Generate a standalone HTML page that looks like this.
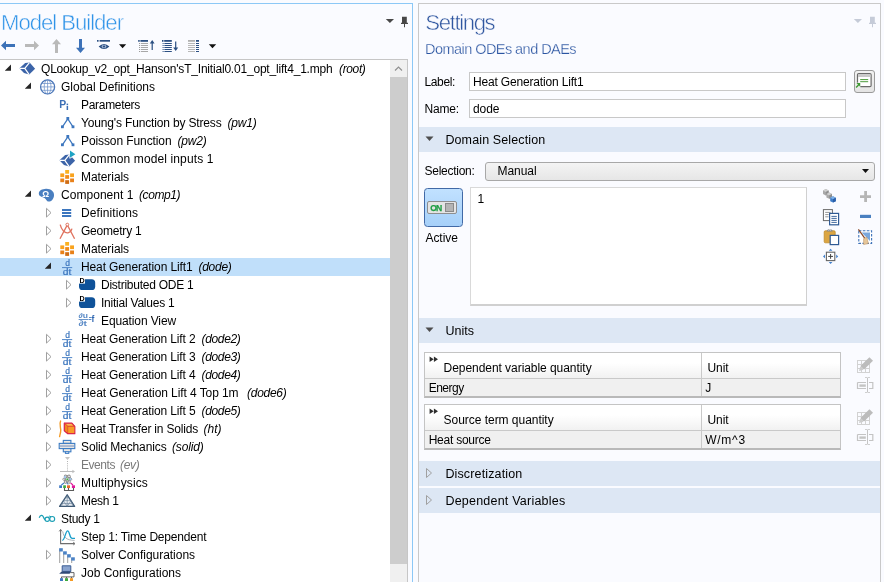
<!DOCTYPE html>
<html><head><meta charset="utf-8"><title>Model Builder</title>
<style>
html,body{margin:0;padding:0;width:884px;height:582px;overflow:hidden;}
body{width:884px;height:582px;overflow:hidden;background:#fafbff;position:relative;font-family:"Liberation Sans", sans-serif;}
.t{position:absolute;white-space:nowrap;line-height:1;}
</style></head><body><div style="position:absolute;left:0;top:0;width:884px;height:582px;overflow:hidden;will-change:transform;">
<div style="position:absolute;left:-2px;top:3px;width:415px;height:600px;border:1px solid #8cc8f6;box-sizing:border-box;"></div>
<div style="position:absolute;left:0px;top:59px;width:408px;height:530px;background:#fff;border-top:1px solid #c6c6c6;border-right:1px solid #c6c6c6;box-sizing:border-box;"></div>
<div style="position:absolute;left:390px;top:60px;width:17px;height:522px;background:#f0f0f0;"></div>
<div style="position:absolute;left:390px;top:77px;width:17px;height:487px;background:#cdcdcd;"></div>
<svg style="position:absolute;left:390px;top:60px" width="17" height="17" viewBox="0 0 17 17"><path d="M5 10.5 L8.5 7 L12 10.5" fill="none" stroke="#909090" stroke-width="1.15"/></svg>
<svg style="position:absolute;left:384px;top:14px" width="28" height="14" viewBox="0 0 28 14"><path d="M1.8 4.9 H10 L5.9 9 Z" fill="#484848"/><path d="M18 2.8 H22.8 V8.7 H24 V10 H21 V13.2 H20 V10 H17 V8.7 H18 Z" fill="#484848"/></svg>
<div style="position:absolute;left:418px;top:3px;width:463px;height:600px;border:1px solid #c9c9c9;box-sizing:border-box;"></div>
<svg style="position:absolute;left:852px;top:14px" width="28" height="14" viewBox="0 0 28 14"><path d="M1.8 4.9 H10 L5.9 9 Z" fill="#c5cbd8"/><path d="M18 2.8 H22.8 V8.7 H24 V10 H21 V13.2 H20 V10 H17 V8.7 H18 Z" fill="#c5cbd8"/></svg>
<div style="position:absolute;left:469px;top:72px;width:377px;height:19px;background:#fff;border:1px solid #c8c8c8;box-sizing:border-box;"></div>
<div style="position:absolute;left:469px;top:99px;width:377px;height:19px;background:#fff;border:1px solid #c8c8c8;box-sizing:border-box;"></div>
<div style="position:absolute;left:854px;top:70px;width:21px;height:23px;background:linear-gradient(#f2f2f2,#e4e4e4);border:1px solid #9a9a9a;border-radius:3px;box-sizing:border-box;"></div>
<div style="position:absolute;left:419px;top:127px;width:461px;height:25px;background:#dde7f4;"></div>
<svg style="position:absolute;left:424px;top:135px" width="12" height="8" viewBox="0 0 12 8"><path d="M1.5 1.5 H9.5 L5.5 6 Z" fill="#4d4d4d"/></svg>
<div style="position:absolute;left:419px;top:318px;width:461px;height:25px;background:#dde7f4;"></div>
<svg style="position:absolute;left:424px;top:326px" width="12" height="8" viewBox="0 0 12 8"><path d="M1.5 1.5 H9.5 L5.5 6 Z" fill="#4d4d4d"/></svg>
<div style="position:absolute;left:419px;top:461px;width:461px;height:25px;background:#dde7f4;"></div>
<svg style="position:absolute;left:424px;top:467px" width="10" height="12" viewBox="0 0 10 12"><path d="M2.5 1.5 L7.5 6 L2.5 10.5 Z" fill="none" stroke="#a0a0a0" stroke-width="1"/></svg>
<div style="position:absolute;left:419px;top:488px;width:461px;height:25px;background:#dde7f4;"></div>
<svg style="position:absolute;left:424px;top:494px" width="10" height="12" viewBox="0 0 10 12"><path d="M2.5 1.5 L7.5 6 L2.5 10.5 Z" fill="none" stroke="#a0a0a0" stroke-width="1"/></svg>
<div style="position:absolute;left:485px;top:162px;width:390px;height:19px;background:linear-gradient(#f4f4f4,#e6e6e6);border:1px solid #a8a8a8;border-radius:3px;box-sizing:border-box;"></div>
<svg style="position:absolute;left:861px;top:168px" width="10" height="6" viewBox="0 0 10 6"><path d="M1 1 H8 L4.5 5 Z" fill="#111"/></svg>
<div style="position:absolute;left:423.5px;top:187.5px;width:39px;height:39px;background:linear-gradient(#c1e1ff,#a6d0f9);border:1.5px solid #4169a6;border-radius:3.5px;box-sizing:border-box;"></div>
<div style="position:absolute;left:427px;top:201px;width:30px;height:13px;background:#e4e4e4;border:1px solid #8e8e8e;border-radius:2px;box-sizing:border-box;"></div>
<div style="position:absolute;left:445px;top:203px;width:9px;height:9px;background:#b4b4b4;border:1px solid #8a8a8a;box-sizing:border-box;"></div>
<div style="position:absolute;left:470px;top:187px;width:337px;height:119px;background:#fff;border:1px solid #d9d9d9;border-bottom:2px solid #d0d0d0;border-right:1px solid #d0d0d0;box-sizing:border-box;"></div>
<div style="position:absolute;left:424px;top:352px;width:417px;height:46px;background:#f0f0f0;border:1px solid #c4c4c4;border-bottom:2px solid #b9b9b9;box-sizing:border-box;"></div>
<div style="position:absolute;left:425px;top:353px;width:415px;height:25px;background:linear-gradient(#ffffff 40%,#f1f1f1);border-bottom:1px solid #c9c9c9;"></div>
<div style="position:absolute;left:701px;top:353px;width:1px;height:43px;background:#c9c9c9;"></div>
<svg style="position:absolute;left:429px;top:356px" width="10" height="7" viewBox="0 0 10 7"><path d="M0.6 0.4 L4.7 3.2 L0.6 6 Z M4.9 0.4 L9 3.2 L4.9 6 Z" fill="#2e2e2e"/></svg>
<div style="position:absolute;left:424px;top:404px;width:417px;height:46px;background:#f0f0f0;border:1px solid #c4c4c4;border-bottom:2px solid #b9b9b9;box-sizing:border-box;"></div>
<div style="position:absolute;left:425px;top:405px;width:415px;height:25px;background:linear-gradient(#ffffff 40%,#f1f1f1);border-bottom:1px solid #c9c9c9;"></div>
<div style="position:absolute;left:701px;top:405px;width:1px;height:43px;background:#c9c9c9;"></div>
<svg style="position:absolute;left:429px;top:408px" width="10" height="7" viewBox="0 0 10 7"><path d="M0.6 0.4 L4.7 3.2 L0.6 6 Z M4.9 0.4 L9 3.2 L4.9 6 Z" fill="#2e2e2e"/></svg>
<div style="position:absolute;left:0px;top:258px;width:390px;height:18px;background:#c0dffa;"></div>
<svg style="position:absolute;left:5px;top:64px" width="10" height="10" viewBox="0 0 10 10"><path d="M6 0.6 V6.8 H-0.2 Z" fill="#262626"/></svg>
<svg style="position:absolute;left:25px;top:82px" width="10" height="10" viewBox="0 0 10 10"><path d="M6 0.6 V6.8 H-0.2 Z" fill="#262626"/></svg>
<svg style="position:absolute;left:25px;top:190px" width="10" height="10" viewBox="0 0 10 10"><path d="M6 0.6 V6.8 H-0.2 Z" fill="#262626"/></svg>
<svg style="position:absolute;left:45px;top:207px" width="10" height="12" viewBox="0 0 10 12"><path d="M1.5 1.3 L6 5.7 L1.5 10.1 Z" fill="#fff" stroke="#a0a0a0" stroke-width="1"/></svg>
<svg style="position:absolute;left:45px;top:225px" width="10" height="12" viewBox="0 0 10 12"><path d="M1.5 1.3 L6 5.7 L1.5 10.1 Z" fill="#fff" stroke="#a0a0a0" stroke-width="1"/></svg>
<svg style="position:absolute;left:45px;top:243px" width="10" height="12" viewBox="0 0 10 12"><path d="M1.5 1.3 L6 5.7 L1.5 10.1 Z" fill="#fff" stroke="#a0a0a0" stroke-width="1"/></svg>
<svg style="position:absolute;left:45px;top:262px" width="10" height="10" viewBox="0 0 10 10"><path d="M6 0.6 V6.8 H-0.2 Z" fill="#262626"/></svg>
<svg style="position:absolute;left:65px;top:279px" width="10" height="12" viewBox="0 0 10 12"><path d="M1.5 1.3 L6 5.7 L1.5 10.1 Z" fill="#fff" stroke="#a0a0a0" stroke-width="1"/></svg>
<svg style="position:absolute;left:65px;top:297px" width="10" height="12" viewBox="0 0 10 12"><path d="M1.5 1.3 L6 5.7 L1.5 10.1 Z" fill="#fff" stroke="#a0a0a0" stroke-width="1"/></svg>
<svg style="position:absolute;left:45px;top:333px" width="10" height="12" viewBox="0 0 10 12"><path d="M1.5 1.3 L6 5.7 L1.5 10.1 Z" fill="#fff" stroke="#a0a0a0" stroke-width="1"/></svg>
<svg style="position:absolute;left:45px;top:351px" width="10" height="12" viewBox="0 0 10 12"><path d="M1.5 1.3 L6 5.7 L1.5 10.1 Z" fill="#fff" stroke="#a0a0a0" stroke-width="1"/></svg>
<svg style="position:absolute;left:45px;top:369px" width="10" height="12" viewBox="0 0 10 12"><path d="M1.5 1.3 L6 5.7 L1.5 10.1 Z" fill="#fff" stroke="#a0a0a0" stroke-width="1"/></svg>
<svg style="position:absolute;left:45px;top:387px" width="10" height="12" viewBox="0 0 10 12"><path d="M1.5 1.3 L6 5.7 L1.5 10.1 Z" fill="#fff" stroke="#a0a0a0" stroke-width="1"/></svg>
<svg style="position:absolute;left:45px;top:405px" width="10" height="12" viewBox="0 0 10 12"><path d="M1.5 1.3 L6 5.7 L1.5 10.1 Z" fill="#fff" stroke="#a0a0a0" stroke-width="1"/></svg>
<svg style="position:absolute;left:45px;top:423px" width="10" height="12" viewBox="0 0 10 12"><path d="M1.5 1.3 L6 5.7 L1.5 10.1 Z" fill="#fff" stroke="#a0a0a0" stroke-width="1"/></svg>
<svg style="position:absolute;left:45px;top:441px" width="10" height="12" viewBox="0 0 10 12"><path d="M1.5 1.3 L6 5.7 L1.5 10.1 Z" fill="#fff" stroke="#a0a0a0" stroke-width="1"/></svg>
<svg style="position:absolute;left:45px;top:459px" width="10" height="12" viewBox="0 0 10 12"><path d="M1.5 1.3 L6 5.7 L1.5 10.1 Z" fill="#fff" stroke="#a0a0a0" stroke-width="1"/></svg>
<svg style="position:absolute;left:45px;top:477px" width="10" height="12" viewBox="0 0 10 12"><path d="M1.5 1.3 L6 5.7 L1.5 10.1 Z" fill="#fff" stroke="#a0a0a0" stroke-width="1"/></svg>
<svg style="position:absolute;left:45px;top:495px" width="10" height="12" viewBox="0 0 10 12"><path d="M1.5 1.3 L6 5.7 L1.5 10.1 Z" fill="#fff" stroke="#a0a0a0" stroke-width="1"/></svg>
<svg style="position:absolute;left:25px;top:514px" width="10" height="10" viewBox="0 0 10 10"><path d="M6 0.6 V6.8 H-0.2 Z" fill="#262626"/></svg>
<svg style="position:absolute;left:45px;top:549px" width="10" height="12" viewBox="0 0 10 12"><path d="M1.5 1.3 L6 5.7 L1.5 10.1 Z" fill="#fff" stroke="#a0a0a0" stroke-width="1"/></svg>
<svg style="position:absolute;left:0px;top:0px" width="230" height="58" viewBox="0 0 230 58"><path d="M1 45.5 L6 40.8 V44 H15 V47 H6 V50.2 Z" fill="#3d72b8"/><path d="M39 45.5 L34 40.8 V44 H25 V47 H34 V50.2 Z" fill="#b9b9b9"/><path d="M56.5 39 L61 44.3 H58 V53 H55 V44.3 H52 Z" fill="#b9b9b9"/><path d="M80.5 53 L85 47.8 H82 V39 H79 V47.8 H76 Z" fill="#3d72b8"/><rect x="97" y="40" width="1.6" height="1.7" fill="#2b4f82"/><rect x="99.6" y="40" width="10.4" height="1.7" fill="#2b4f82"/><path d="M98.6 46.5 Q104 41.4 109.4 46.5 Q104 51.6 98.6 46.5 Z" fill="#2b4f82"/><ellipse cx="104" cy="46.5" rx="2.4" ry="1.7" fill="#9fb3d2"/><circle cx="104" cy="46.5" r="1.1" fill="#2b4f82"/><path d="M119 44.2 H126.2 L122.6 48.2 Z" fill="#111"/><rect x="138.2" y="40" width="1.5" height="1.8" fill="#2b4f82"/><rect x="140.4" y="40" width="7.6" height="1.8" fill="#2b4f82"/><rect x="139" y="43" width="1" height="1" fill="#9a9a9a"/><rect x="140.8" y="43" width="7.2" height="1" fill="#a8a8a8"/><rect x="139" y="45" width="1" height="1" fill="#9a9a9a"/><rect x="140.8" y="45" width="7.2" height="1" fill="#a8a8a8"/><rect x="139" y="47" width="1" height="1" fill="#9a9a9a"/><rect x="140.8" y="47" width="7.2" height="1" fill="#a8a8a8"/><rect x="139" y="49" width="1" height="1" fill="#9a9a9a"/><rect x="140.8" y="49" width="7.2" height="1" fill="#a8a8a8"/><rect x="139" y="51" width="1" height="1" fill="#9a9a9a"/><rect x="140.8" y="51" width="7.2" height="1" fill="#a8a8a8"/><path d="M152.2 40 L154.6 43.4 H152.8 V50 H151.6 V43.4 H149.8 Z" fill="#2b4f82"/><rect x="162" y="40" width="1.5" height="1.8" fill="#2b4f82"/><rect x="164.2" y="40" width="7.6" height="1.8" fill="#2b4f82"/><rect x="162.6" y="43" width="1" height="1" fill="#2b4f82"/><rect x="164.4" y="43" width="7.4" height="1" fill="#2b4f82"/><rect x="162.6" y="45" width="1" height="1" fill="#2b4f82"/><rect x="164.4" y="45" width="7.4" height="1" fill="#2b4f82"/><rect x="162.6" y="47" width="1" height="1" fill="#2b4f82"/><rect x="164.4" y="47" width="7.4" height="1" fill="#2b4f82"/><rect x="162.6" y="49" width="1" height="1" fill="#2b4f82"/><rect x="164.4" y="49" width="7.4" height="1" fill="#2b4f82"/><rect x="162.6" y="51" width="1" height="1" fill="#2b4f82"/><rect x="164.4" y="51" width="7.4" height="1" fill="#2b4f82"/><path d="M175.7 51 L178.2 47.6 H176.3 V41.4 H175.1 V47.6 H173.2 Z" fill="#2b4f82"/><rect x="188" y="40" width="7" height="1.8" fill="#b0b0b0"/><rect x="196" y="40" width="3" height="1.8" fill="#2b4f82"/><rect x="188" y="43" width="7" height="1" fill="#b8b8b8"/><rect x="196" y="43" width="3" height="1" fill="#2b4f82"/><rect x="188" y="45" width="7" height="1" fill="#b8b8b8"/><rect x="196" y="45" width="3" height="1" fill="#2b4f82"/><rect x="188" y="47" width="7" height="1" fill="#b8b8b8"/><rect x="196" y="47" width="3" height="1" fill="#2b4f82"/><rect x="188" y="49" width="7" height="1" fill="#b8b8b8"/><rect x="196" y="49" width="3" height="1" fill="#2b4f82"/><rect x="188" y="51" width="7" height="1" fill="#b8b8b8"/><rect x="196" y="51" width="3" height="1" fill="#2b4f82"/><path d="M208.8 44.2 H216.2 L212.5 48.2 Z" fill="#111"/></svg>
<svg style="position:absolute;left:19px;top:60px" width="18" height="18" viewBox="0 0 18 18"><path d="M0.4 8.3 L6.2 2.9 L10.6 2.4 L16.1 8.7 L10.2 14.6 L5 12.9 Z" fill="#3c64a8"/><path d="M0.6 8.3 L5.8 8.4 L10.4 2.6 M5.8 8.4 L10 14.4" fill="none" stroke="#fff" stroke-width="1.2"/></svg>
<svg style="position:absolute;left:39px;top:78px" width="18" height="18" viewBox="0 0 18 18"><circle cx="8.6" cy="8.9" r="7" fill="#fff" stroke="#4a76b8" stroke-width="1.3"/><ellipse cx="8.6" cy="8.9" rx="3.4" ry="7" fill="none" stroke="#6d91c8" stroke-width="0.75"/><path d="M8.6 2 V16 M1.8 8.9 H15.4 M2.8 5.5 H14.4 M2.8 12.3 H14.4" stroke="#6d91c8" stroke-width="0.75" fill="none"/></svg>
<svg style="position:absolute;left:59px;top:96px" width="18" height="18" viewBox="0 0 18 18"><text x="0.2" y="12.2" font-family="Liberation Sans" font-size="10.4" font-weight="bold" fill="#3c6fb6">P</text><rect x="7.6" y="7.6" width="1.5" height="1.4" fill="#3c6fb6"/><rect x="7.6" y="9.8" width="1.5" height="4.2" fill="#3c6fb6"/></svg>
<svg style="position:absolute;left:60px;top:114px" width="18" height="18" viewBox="0 0 18 18"><path d="M2.4 12.8 L7.8 4.8 L13 12.8" fill="none" stroke="#3c76be" stroke-width="1.2"/><rect x="6.4" y="3" width="2.8" height="2.8" fill="#3c76be"/><rect x="1" y="11.4" width="2.8" height="2.8" fill="#3c76be"/><rect x="11.6" y="11.4" width="2.8" height="2.8" fill="#3c76be"/></svg>
<svg style="position:absolute;left:60px;top:132px" width="18" height="18" viewBox="0 0 18 18"><path d="M2.4 12.8 L7.8 4.8 L13 12.8" fill="none" stroke="#3c76be" stroke-width="1.2"/><rect x="6.4" y="3" width="2.8" height="2.8" fill="#3c76be"/><rect x="1" y="11.4" width="2.8" height="2.8" fill="#3c76be"/><rect x="11.6" y="11.4" width="2.8" height="2.8" fill="#3c76be"/></svg>
<svg style="position:absolute;left:59px;top:150px" width="18" height="18" viewBox="0 0 18 18"><g transform="translate(0,2)"><path d="M0.4 8.3 L6.2 2.9 L10.6 2.4 L16.1 8.7 L10.2 14.6 L5 12.9 Z" fill="#3c64a8"/><path d="M0.6 8.3 L5.8 8.4 L10.4 2.6 M5.8 8.4 L10 14.4" fill="none" stroke="#fff" stroke-width="1.2"/></g><path d="M10.4 0 L11.4 0 L17 4.2 L11.4 8.4 L10.4 8.4 Z" fill="#fff"/><path d="M11 0.6 L16.4 4.2 L11 7.8 Z" fill="#1fa3c4"/></svg>
<svg style="position:absolute;left:60px;top:170px" width="16" height="16" viewBox="0 0 16 16"><rect x="0.3" y="3.4" width="3.9" height="3.7" fill="#f9a21c"/><rect x="0.3" y="8.5" width="3.9" height="3.7" fill="#e8811a"/><rect x="5.2" y="0" width="3.9" height="3.7" fill="#fbb11f"/><rect x="5.2" y="5.1" width="3.9" height="3.7" fill="#f08a18"/><rect x="5.2" y="10.2" width="3.9" height="3.7" fill="#cf6c14"/><rect x="10.1" y="3.4" width="3.9" height="3.7" fill="#f9a21c"/><rect x="10.1" y="8.5" width="3.9" height="3.7" fill="#e8811a"/></svg>
<svg style="position:absolute;left:60px;top:242px" width="16" height="16" viewBox="0 0 16 16"><rect x="0.3" y="3.4" width="3.9" height="3.7" fill="#f9a21c"/><rect x="0.3" y="8.5" width="3.9" height="3.7" fill="#e8811a"/><rect x="5.2" y="0" width="3.9" height="3.7" fill="#fbb11f"/><rect x="5.2" y="5.1" width="3.9" height="3.7" fill="#f08a18"/><rect x="5.2" y="10.2" width="3.9" height="3.7" fill="#cf6c14"/><rect x="10.1" y="3.4" width="3.9" height="3.7" fill="#f9a21c"/><rect x="10.1" y="8.5" width="3.9" height="3.7" fill="#e8811a"/></svg>
<svg style="position:absolute;left:38px;top:186px" width="18" height="18" viewBox="0 0 18 18"><g transform="translate(0,2.2)"><path d="M8 0.6 C12.5 0.4 16.6 3.2 16 7.6 C15.6 11.2 13.2 13.6 10.4 13.4 C8.6 13.2 8.4 11 6.8 10 C4.6 8.8 0.8 8.6 0.8 5.4 C0.8 2.4 4.2 0.8 8 0.6 Z" fill="#4a7fc0"/><text x="4.2" y="9" font-family="Liberation Sans" font-size="8.6" font-weight="bold" fill="#fff">Ω</text></g></svg>
<svg style="position:absolute;left:62px;top:204px" width="18" height="18" viewBox="0 0 18 18"><rect x="0" y="5" width="9.2" height="2" fill="#3c76be"/><rect x="0" y="8" width="9.2" height="2" fill="#3c76be"/><rect x="0" y="11" width="9.2" height="2" fill="#3c76be"/></svg>
<svg style="position:absolute;left:59px;top:222px" width="18" height="18" viewBox="0 0 18 18"><path d="M1 16.8 L8.3 3 L15.6 16.8" fill="none" stroke="#e0735f" stroke-width="1.35"/><circle cx="8.3" cy="2.6" r="1.4" fill="#fff" stroke="#e0735f" stroke-width="1"/><path d="M1.2 2.6 C2.4 8 6 11.4 9 10.8 C11 10.4 12.4 8.6 13 6.6" fill="none" stroke="#e0735f" stroke-width="1.3"/></svg>
<svg style="position:absolute;left:62px;top:259px" width="18" height="18" viewBox="0 0 18 18"><text x="3.3" y="6.7" font-family="Liberation Sans" font-size="8.5" fill="#3c76be" stroke="#3c76be" stroke-width="0.2">d</text><rect x="0" y="8.1" width="10.2" height="1" fill="#4f86c8"/><text x="0.8" y="15.8" font-family="Liberation Sans" font-size="8.5" fill="#3c76be" stroke="#3c76be" stroke-width="0.2" textLength="8.6" lengthAdjust="spacingAndGlyphs">dt</text></svg>
<svg style="position:absolute;left:62px;top:331px" width="18" height="18" viewBox="0 0 18 18"><text x="3.3" y="6.7" font-family="Liberation Sans" font-size="8.5" fill="#3c76be" stroke="#3c76be" stroke-width="0.2">d</text><rect x="0" y="8.1" width="10.2" height="1" fill="#4f86c8"/><text x="0.8" y="15.8" font-family="Liberation Sans" font-size="8.5" fill="#3c76be" stroke="#3c76be" stroke-width="0.2" textLength="8.6" lengthAdjust="spacingAndGlyphs">dt</text></svg>
<svg style="position:absolute;left:62px;top:349px" width="18" height="18" viewBox="0 0 18 18"><text x="3.3" y="6.7" font-family="Liberation Sans" font-size="8.5" fill="#3c76be" stroke="#3c76be" stroke-width="0.2">d</text><rect x="0" y="8.1" width="10.2" height="1" fill="#4f86c8"/><text x="0.8" y="15.8" font-family="Liberation Sans" font-size="8.5" fill="#3c76be" stroke="#3c76be" stroke-width="0.2" textLength="8.6" lengthAdjust="spacingAndGlyphs">dt</text></svg>
<svg style="position:absolute;left:62px;top:367px" width="18" height="18" viewBox="0 0 18 18"><text x="3.3" y="6.7" font-family="Liberation Sans" font-size="8.5" fill="#3c76be" stroke="#3c76be" stroke-width="0.2">d</text><rect x="0" y="8.1" width="10.2" height="1" fill="#4f86c8"/><text x="0.8" y="15.8" font-family="Liberation Sans" font-size="8.5" fill="#3c76be" stroke="#3c76be" stroke-width="0.2" textLength="8.6" lengthAdjust="spacingAndGlyphs">dt</text></svg>
<svg style="position:absolute;left:62px;top:385px" width="18" height="18" viewBox="0 0 18 18"><text x="3.3" y="6.7" font-family="Liberation Sans" font-size="8.5" fill="#3c76be" stroke="#3c76be" stroke-width="0.2">d</text><rect x="0" y="8.1" width="10.2" height="1" fill="#4f86c8"/><text x="0.8" y="15.8" font-family="Liberation Sans" font-size="8.5" fill="#3c76be" stroke="#3c76be" stroke-width="0.2" textLength="8.6" lengthAdjust="spacingAndGlyphs">dt</text></svg>
<svg style="position:absolute;left:62px;top:403px" width="18" height="18" viewBox="0 0 18 18"><text x="3.3" y="6.7" font-family="Liberation Sans" font-size="8.5" fill="#3c76be" stroke="#3c76be" stroke-width="0.2">d</text><rect x="0" y="8.1" width="10.2" height="1" fill="#4f86c8"/><text x="0.8" y="15.8" font-family="Liberation Sans" font-size="8.5" fill="#3c76be" stroke="#3c76be" stroke-width="0.2" textLength="8.6" lengthAdjust="spacingAndGlyphs">dt</text></svg>
<svg style="position:absolute;left:79px;top:277px" width="18" height="18" viewBox="0 0 18 18"><rect x="0" y="2.2" width="16.2" height="10.8" rx="3.6" ry="3.6" fill="#0f5299"/><rect x="0" y="0" width="6" height="6.6" fill="#fff"/><text x="0.4" y="6" font-family="Liberation Sans" font-size="7.2" font-weight="bold" fill="#000">D</text></svg>
<svg style="position:absolute;left:79px;top:295px" width="18" height="18" viewBox="0 0 18 18"><rect x="0" y="2.2" width="16.2" height="10.8" rx="3.6" ry="3.6" fill="#0f5299"/><rect x="0" y="0" width="6" height="6.6" fill="#fff"/><text x="0.4" y="6" font-family="Liberation Sans" font-size="7.2" font-weight="bold" fill="#000">D</text></svg>
<svg style="position:absolute;left:78px;top:313px" width="18" height="18" viewBox="0 0 18 18"><text x="0.6" y="4.8" font-family="Liberation Sans" font-size="7.6" font-weight="bold" fill="#5a8ac6" textLength="9.4" lengthAdjust="spacingAndGlyphs">∂u</text><rect x="0.6" y="6" width="10" height="0.9" fill="#5a8ac6"/><text x="0.6" y="12.6" font-family="Liberation Sans" font-size="7.6" font-weight="bold" fill="#5a8ac6" textLength="8.4" lengthAdjust="spacingAndGlyphs">∂t</text><rect x="11" y="4" width="2.4" height="1" fill="#5a8ac6"/><rect x="11" y="6" width="2.4" height="1" fill="#5a8ac6"/><text x="13.6" y="9" font-family="Liberation Sans" font-size="8.4" font-weight="bold" fill="#2d65b0">f</text></svg>
<svg style="position:absolute;left:58px;top:420px" width="18" height="18" viewBox="0 0 18 18"><path d="M2.6 1 C0.6 4.4 3.6 8.6 2.6 12 C2.2 13.8 1.8 15.4 1.6 16.6" fill="none" stroke="#f59a23" stroke-width="1.4" stroke-linecap="round"/><g transform="translate(0,-2)"><path d="M6.3 5.2 H13.9 L16.8 8.3 V15.7 H9.8 L6.3 12.7 Z" fill="#f7941d" stroke="#d81e4a" stroke-width="1.2" stroke-linejoin="round"/><path d="M6.3 5.2 L9.8 8.3 H16.8 M9.8 8.3 V15.7" fill="none" stroke="#dd3b3b" stroke-width="0.9"/><path d="M8.2 6 H13.4 L15 7.5 H9.9 Z" fill="#fbb55a"/><rect x="10.4" y="8.9" width="5.8" height="6.2" fill="#f89c26"/><path d="M7 6.8 L9.2 8.8 V14.2 L7 12.4 Z" fill="#f08a1a"/></g></svg>
<svg style="position:absolute;left:58px;top:438px" width="18" height="18" viewBox="0 0 18 18"><rect x="5.3" y="2.4" width="7.6" height="3" fill="#ece9e4" stroke="#3c7cc4" stroke-width="1.1"/><rect x="1.2" y="5.4" width="15.6" height="5.2" fill="#e6e6e6" stroke="#3c7cc4" stroke-width="1.1"/><rect x="1.9" y="7.1" width="14.2" height="1.9" fill="#a9b7d0"/><rect x="5.3" y="10.6" width="7.6" height="3.2" fill="#ece9e4" stroke="#3c7cc4" stroke-width="1.1"/><rect x="7.4" y="13.8" width="3.4" height="1.6" fill="#fff" stroke="#3c7cc4" stroke-width="1"/></svg>
<svg style="position:absolute;left:58px;top:456px" width="18" height="18" viewBox="0 0 18 18"><path d="M7 1 H12 L9.5 4 Z" fill="#c4c4c4"/><rect x="9" y="5" width="1" height="1" fill="#b4b4b4"/><rect x="9" y="7.2" width="1" height="1" fill="#b4b4b4"/><rect x="9" y="9.4" width="1" height="1" fill="#b4b4b4"/><rect x="9" y="11.6" width="1" height="1" fill="#b4b4b4"/><rect x="9" y="13.6" width="1" height="1" fill="#b4b4b4"/><path d="M2 15.5 H16" stroke="#bdbdbd" stroke-width="1"/><path d="M14.4 13.8 L17 15.5 L14.4 17.2 Z" fill="#bdbdbd"/></svg>
<svg style="position:absolute;left:58px;top:474px" width="18" height="18" viewBox="0 0 18 18"><ellipse cx="9.3" cy="5.2" rx="4.6" ry="1.9" fill="none" stroke="#8f8f8f" stroke-width="1"/><ellipse cx="9.3" cy="5.2" rx="4.6" ry="1.9" fill="none" stroke="#8f8f8f" stroke-width="1" transform="rotate(60 9.3 5.2)"/><ellipse cx="9.3" cy="5.2" rx="4.6" ry="1.9" fill="none" stroke="#8f8f8f" stroke-width="1" transform="rotate(120 9.3 5.2)"/><rect x="6" y="2.2" width="2" height="2" fill="#9cc4ee"/><rect x="11.4" y="4.2" width="2" height="2" fill="#9cc4ee"/><rect x="8.4" y="4.4" width="1.9" height="1.9" fill="#3faa3f"/><path d="M3.4 11 L6 9" stroke="#3d78c4" stroke-width="1.1"/><path d="M15 11 L12.6 9" stroke="#e0189a" stroke-width="1.1"/><path d="M8.8 8.6 L10 10.6" stroke="#3d78c4" stroke-width="1"/><rect x="1.2" y="11.3" width="2.8" height="2.7" fill="#3d78c4"/><rect x="5.2" y="11.3" width="2.7" height="2.7" fill="#3faa3f"/><rect x="9" y="11.3" width="3" height="2.7" fill="#e8682b"/><rect x="13.9" y="11.3" width="3.1" height="2.7" fill="#e0189a"/><path d="M6.5 14 V16.5 H15.5 V14 M10.5 14 V16.5" stroke="#5a5a5a" stroke-width="1.1" fill="none"/></svg>
<svg style="position:absolute;left:58px;top:492px" width="18" height="18" viewBox="0 0 18 18"><path d="M9.2 2.8 L16.6 14.4 H1.6 Z" fill="#e6ebf1" stroke="#3f5a75" stroke-width="1.3" stroke-linejoin="round"/><path d="M5.4 8.6 H13 M5.4 8.6 L9.2 14.4 L13 8.6 M9.2 2.8 V14.4 M3.5 11.5 H14.9 M5.4 8.6 L3.5 14.4 M13 8.6 L14.9 14.4 M7.3 5.7 H11.1" stroke="#5b7690" stroke-width="0.55" fill="none"/></svg>
<svg style="position:absolute;left:38px;top:510px" width="18" height="18" viewBox="0 0 18 18"><path d="M1.2 7.8 C2.4 4.8 4.4 4.8 5.4 7 C6 8.4 6.4 9.4 7.2 9.8" fill="none" stroke="#1b9fb5" stroke-width="1.25"/><circle cx="9.2" cy="9.2" r="2.15" fill="none" stroke="#1b9fb5" stroke-width="1.15"/><circle cx="14.2" cy="8.9" r="2.45" fill="none" stroke="#1b9fb5" stroke-width="1.15"/><path d="M10.4 7.2 Q11.6 5.2 13 6.8" fill="none" stroke="#1b9fb5" stroke-width="1"/></svg>
<svg style="position:absolute;left:58px;top:528px" width="18" height="18" viewBox="0 0 18 18"><path d="M2.6 1.8 V15.6 H16.6" fill="none" stroke="#6e6e6e" stroke-width="1.1"/><path d="M1.2 3.4 L2.6 1.4 L4 3.4 M15.2 14.2 L17 15.6 L15.2 17" fill="none" stroke="#6e6e6e" stroke-width="0.9"/><path d="M4.8 3.6 C5.6 9 8 12.2 16.6 12.4" fill="none" stroke="#a3a8ae" stroke-width="0.9"/><path d="M4.2 12.4 C7 12.4 7.4 2.8 9.6 2.8 C11.8 2.8 11.4 10.4 14.2 10.4 L17 10.4" fill="none" stroke="#1b9fcb" stroke-width="1.3"/></svg>
<svg style="position:absolute;left:58px;top:548px" width="18" height="18" viewBox="0 0 18 18"><rect x="1.2" y="0.7" width="1" height="14.3" fill="#9e9e9e"/><rect x="1.2" y="0.2" width="3.6" height="3.3" fill="#4a82c6"/><rect x="5.2" y="3.8" width="1" height="11.2" fill="#9e9e9e"/><rect x="5.2" y="3.3" width="3.6" height="3.3" fill="#4a82c6"/><rect x="9.2" y="6.7" width="1" height="8.3" fill="#9e9e9e"/><rect x="9.2" y="6.2" width="3.6" height="3.3" fill="#4a82c6"/><rect x="13.2" y="9.8" width="1" height="5.199999999999999" fill="#9e9e9e"/><rect x="13.2" y="9.3" width="3.6" height="3.3" fill="#4a82c6"/></svg>
<svg style="position:absolute;left:58px;top:564px" width="18" height="18" viewBox="0 0 18 18"><path d="M4.2 1.8 H12.8 V7.4 H4.2 Z" fill="#8aa4cf" stroke="#3a5c94" stroke-width="1"/><path d="M3.6 7.6 H13.4 L11.6 9.8 H1.2 Z" fill="#2f4a78"/><path d="M12.4 8.6 H16 V12.9 M3.4 12.9 H16 M3.5 12.9 V14.4 M8.5 12.9 V14.4 M13.5 12.9 V14.4" stroke="#555" stroke-width="0.9" fill="none"/><rect x="2" y="14.2" width="3" height="2.8" fill="#3d78c4"/><rect x="7" y="14.2" width="3" height="2.8" fill="#3faa3f"/><rect x="12" y="14.2" width="3" height="2.8" fill="#f59a23"/></svg>
<svg style="position:absolute;left:854px;top:70px" width="21" height="23" viewBox="0 0 21 23"><rect x="3.5" y="3.6" width="13.6" height="13" rx="1.2" fill="#fff" stroke="#6a6a6a" stroke-width="1.2"/><rect x="4.1" y="4.2" width="12.4" height="2.8" fill="#c9c9c9"/><path d="M6.2 9.6 H14.2 M6.2 11.7 H14.2" stroke="#4a9a3a" stroke-width="1"/><rect x="1.6" y="12.6" width="4.8" height="6" fill="#ebebeb"/><path d="M2.4 13 H6.2 V16.8 L5 15.6 L2.6 18 L1.6 17 L4 14.4 Z" fill="#3f9a35"/></svg>
<svg style="position:absolute;left:816px;top:184px" width="64" height="84" viewBox="0 0 64 84"><path d="M7 6.6 L9.8 5 L12.6 6.6 V10.0 L9.8 11.4 L7 10.0 Z" fill="#a9a9a9"/><path d="M7 6.6 L9.8 8 L12.6 6.6 L9.8 5 Z" fill="#cfcfcf"/><path d="M9.8 8 V11.4 L12.6 10.0 V6.6 Z" fill="#8f8f8f"/><path d="M10.4 10.0 L13.2 8.4 L16.0 10.0 V13.4 L13.2 14.8 L10.4 13.4 Z" fill="#a9a9a9"/><path d="M10.4 10.0 L13.2 11.4 L16.0 10.0 L13.2 8.4 Z" fill="#cfcfcf"/><path d="M13.2 11.4 V14.8 L16.0 13.4 V10.0 Z" fill="#8f8f8f"/><path d="M14.2 13.799999999999999 L17.0 12.2 L19.799999999999997 13.799999999999999 V17.199999999999996 L17.0 18.599999999999998 L14.2 17.199999999999996 Z" fill="#3d7cc8"/><path d="M14.2 13.799999999999999 L17.0 15.2 L19.799999999999997 13.799999999999999 L17.0 12.2 Z" fill="#7eb0e6"/><path d="M17.0 15.2 V18.599999999999998 L19.799999999999997 17.199999999999996 V13.799999999999999 Z" fill="#2a5ea8"/><path d="M48.2 7 H51 V11.2 H55 V14 H51 V18 H48.2 V14 H44 V11.2 H48.2 Z" fill="#b6b6b6"/><rect x="7.4" y="25.6" width="9" height="11" fill="#fff" stroke="#6a6a6a" stroke-width="1"/><path d="M9.2 28.4 H14.6 M9.2 30.6 H12.6 M9.2 32.8 H12.6" stroke="#8a8a8a" stroke-width="0.9"/><rect x="13.6" y="29.4" width="9" height="11.4" fill="#fff" stroke="#2f5a94" stroke-width="1.2"/><path d="M15.4 32.4 H20.8 M15.4 34.4 H20.8 M15.4 36.4 H20.8 M15.4 38.4 H20.8" stroke="#2f5a94" stroke-width="0.9"/><rect x="44" y="30.8" width="11" height="3.2" fill="#4a80c0"/><rect x="8.2" y="46.8" width="11" height="12" rx="1.2" fill="#dba542" stroke="#c08a2a" stroke-width="0.8"/><path d="M10.8 47.6 V46.4 Q13.7 43.6 16.6 46.4 V47.6 Z" fill="#8e8e8e"/><path d="M12.4 46.2 Q13.7 45 15 46.2" stroke="#fff" stroke-width="0.8" fill="none"/><rect x="14.2" y="51.4" width="8.4" height="9.2" fill="#fff" stroke="#2f5a94" stroke-width="1.2"/><rect x="42.8" y="46.8" width="12.8" height="12.6" fill="#fff" stroke="#3d72b8" stroke-width="1.1" stroke-dasharray="2.6 1.4"/><path d="M45.6 48.6 H54 V57 Z" fill="#7aa7dc"/><path d="M42.4 45.4 L49.6 55.4" stroke="#8b4a2a" stroke-width="1.2"/><path d="M47.6 54.6 L50.8 53.2 L52.4 59.6 L47.6 60.6 Z" fill="#e6c79a" stroke="#b98a5a" stroke-width="0.5"/><rect x="10.4" y="68.2" width="8.4" height="8.4" fill="#fff" stroke="#666" stroke-width="1.1"/><path d="M14.6 70 V74.8 M12.2 72.4 H17" stroke="#444" stroke-width="1"/><path d="M12.8 66.8 L14.6 64.8 L16.4 66.8 Z M12.8 78 L14.6 80 L16.4 78 Z M9 70.6 L7 72.4 L9 74.2 Z M20.2 70.6 L22.2 72.4 L20.2 74.2 Z" fill="#3f7fcc"/></svg>
<svg style="position:absolute;left:856px;top:355px" width="19" height="40" viewBox="0 0 19 40"><rect x="1.5" y="5.5" width="12" height="12" fill="none" stroke="#d2d2d2" stroke-width="1"/><path d="M1.5 9.5 H13.5 M1.5 13.5 H13.5 M5.5 5.5 V17.5 M9.5 5.5 V17.5" stroke="#d2d2d2" stroke-width="1"/><path d="M13.4 2.2 L17 5.8 L8 14.6 L4.4 11 Z" fill="#bcbcbc"/><path d="M4.2 11.4 L7.6 14.8 L3 16 Z" fill="#cdcdcd"/><path d="M1.5 27.5 H10 M13 27.5 H16.8 V33.5 H13 M10 33.5 H1.5 V27.5" fill="none" stroke="#c4c4c4" stroke-width="1.2"/><rect x="3.4" y="29.4" width="6.4" height="2.4" fill="#c4c4c4"/><path d="M11.5 22.5 V37.5 M9.2 22.5 H10.8 M12.2 22.5 H13.8 M9.2 37.5 H10.8 M12.2 37.5 H13.8" stroke="#c4c4c4" stroke-width="1"/></svg>
<svg style="position:absolute;left:856px;top:407px" width="19" height="40" viewBox="0 0 19 40"><rect x="1.5" y="5.5" width="12" height="12" fill="none" stroke="#d2d2d2" stroke-width="1"/><path d="M1.5 9.5 H13.5 M1.5 13.5 H13.5 M5.5 5.5 V17.5 M9.5 5.5 V17.5" stroke="#d2d2d2" stroke-width="1"/><path d="M13.4 2.2 L17 5.8 L8 14.6 L4.4 11 Z" fill="#bcbcbc"/><path d="M4.2 11.4 L7.6 14.8 L3 16 Z" fill="#cdcdcd"/><path d="M1.5 27.5 H10 M13 27.5 H16.8 V33.5 H13 M10 33.5 H1.5 V27.5" fill="none" stroke="#c4c4c4" stroke-width="1.2"/><rect x="3.4" y="29.4" width="6.4" height="2.4" fill="#c4c4c4"/><path d="M11.5 22.5 V37.5 M9.2 22.5 H10.8 M12.2 22.5 H13.8 M9.2 37.5 H10.8 M12.2 37.5 H13.8" stroke="#c4c4c4" stroke-width="1"/></svg>
<span class="t" style="left:1px;top:12.01px;font-size:22.2px;color:#2f93e8;letter-spacing:-1.052px;-webkit-text-stroke:0.5px #fafbff;">Model Builder</span>
<span class="t" style="left:425.3px;top:12.01px;font-size:22.2px;color:#2f56a0;letter-spacing:-1.396px;-webkit-text-stroke:0.5px #fafbff;">Settings</span>
<span class="t" style="left:425px;top:41.73px;font-size:14.5px;color:#2b55a2;letter-spacing:-0.549px;-webkit-text-stroke:0.25px #fafbff;">Domain ODEs and DAEs</span>
<span class="t" style="left:424.5px;top:75.84px;font-size:12px;color:#000;letter-spacing:-0.367px;">Label:</span>
<span class="t" style="left:473px;top:75.84px;font-size:12px;color:#000;letter-spacing:-0.170px;">Heat Generation Lift1</span>
<span class="t" style="left:424.5px;top:102.84px;font-size:12px;color:#000;letter-spacing:-0.169px;">Name:</span>
<span class="t" style="left:473px;top:102.84px;font-size:12px;color:#000;letter-spacing:-0.076px;">dode</span>
<span class="t" style="left:445.4px;top:133.52px;font-size:12.5px;color:#000;letter-spacing:0.127px;">Domain Selection</span>
<span class="t" style="left:445.4px;top:324.52px;font-size:12.5px;color:#000;letter-spacing:0.003px;">Units</span>
<span class="t" style="left:445.4px;top:467.52px;font-size:12.5px;color:#000;letter-spacing:0.141px;">Discretization</span>
<span class="t" style="left:445.4px;top:494.52px;font-size:12.5px;color:#000;letter-spacing:0.220px;">Dependent Variables</span>
<span class="t" style="left:424.5px;top:165.34px;font-size:12px;color:#000;letter-spacing:-0.270px;">Selection:</span>
<span class="t" style="left:497.5px;top:165.34px;font-size:12px;color:#000;letter-spacing:-0.060px;">Manual</span>
<span class="t" style="left:430.3px;top:204.12px;font-size:8.6px;color:#1f9e45;font-weight:bold;letter-spacing:-0.945px;-webkit-text-stroke:0.25px #1f9e45;">ON</span>
<span class="t" style="left:425.5px;top:231.84px;font-size:12px;color:#000;letter-spacing:-0.065px;">Active</span>
<span class="t" style="left:477.5px;top:192.84px;font-size:12px;color:#000;">1</span>
<span class="t" style="left:443.6px;top:361.84px;font-size:12px;color:#000;letter-spacing:-0.053px;">Dependent variable quantity</span>
<span class="t" style="left:707.4px;top:361.84px;font-size:12px;color:#000;letter-spacing:-0.036px;">Unit</span>
<span class="t" style="left:428.7px;top:381.54px;font-size:12px;color:#000;letter-spacing:-0.505px;">Energy</span>
<span class="t" style="left:705.3px;top:381.54px;font-size:12px;color:#000;">J</span>
<span class="t" style="left:443.6px;top:413.84px;font-size:12px;color:#000;letter-spacing:-0.036px;">Source term quantity</span>
<span class="t" style="left:707.4px;top:413.84px;font-size:12px;color:#000;letter-spacing:-0.036px;">Unit</span>
<span class="t" style="left:428.7px;top:433.54px;font-size:12px;color:#000;letter-spacing:-0.246px;">Heat source</span>
<span class="t" style="left:705.3px;top:433.54px;font-size:12px;color:#000;letter-spacing:0.706px;">W/m^3</span>
<span class="t" style="left:41px;top:63.14px;font-size:12px;color:#000;letter-spacing:-0.199px;">QLookup_v2_opt_Hanson'sT_Initial0.01_opt_lift4_1.mph</span>
<span class="t" style="left:339px;top:63.14px;font-size:12px;color:#000;font-style:italic;letter-spacing:-0.362px;">(root)</span>
<span class="t" style="left:61px;top:81.14px;font-size:12px;color:#000;letter-spacing:-0.003px;">Global Definitions</span>
<span class="t" style="left:81px;top:99.14px;font-size:12px;color:#000;letter-spacing:-0.303px;">Parameters</span>
<span class="t" style="left:81px;top:117.14px;font-size:12px;color:#000;letter-spacing:-0.158px;">Young's Function by Stress</span>
<span class="t" style="left:227.5px;top:117.14px;font-size:12px;color:#000;font-style:italic;letter-spacing:-0.203px;">(pw1)</span>
<span class="t" style="left:81px;top:135.14px;font-size:12px;color:#000;letter-spacing:-0.098px;">Poisson Function</span>
<span class="t" style="left:177.5px;top:135.14px;font-size:12px;color:#000;font-style:italic;letter-spacing:-0.203px;">(pw2)</span>
<span class="t" style="left:81px;top:153.14px;font-size:12px;color:#000;letter-spacing:0.116px;">Common model inputs 1</span>
<span class="t" style="left:81px;top:171.14px;font-size:12px;color:#000;letter-spacing:-0.076px;">Materials</span>
<span class="t" style="left:61px;top:189.14px;font-size:12px;color:#000;letter-spacing:0.041px;">Component 1</span>
<span class="t" style="left:139px;top:189.14px;font-size:12px;color:#000;font-style:italic;letter-spacing:-0.431px;">(comp1)</span>
<span class="t" style="left:81px;top:207.14px;font-size:12px;color:#000;letter-spacing:0.088px;">Definitions</span>
<span class="t" style="left:81px;top:225.14px;font-size:12px;color:#000;letter-spacing:-0.220px;">Geometry 1</span>
<span class="t" style="left:81px;top:243.14px;font-size:12px;color:#000;letter-spacing:-0.076px;">Materials</span>
<span class="t" style="left:81px;top:261.14px;font-size:12px;color:#000;letter-spacing:-0.123px;">Heat Generation Lift1</span>
<span class="t" style="left:198.5px;top:261.14px;font-size:12px;color:#000;font-style:italic;letter-spacing:-0.281px;">(dode)</span>
<span class="t" style="left:101px;top:279.14px;font-size:12px;color:#000;letter-spacing:-0.247px;">Distributed ODE 1</span>
<span class="t" style="left:101px;top:297.14px;font-size:12px;color:#000;letter-spacing:-0.229px;">Initial Values 1</span>
<span class="t" style="left:101px;top:315.14px;font-size:12px;color:#000;letter-spacing:-0.115px;">Equation View</span>
<span class="t" style="left:81px;top:333.14px;font-size:12px;color:#000;letter-spacing:-0.132px;">Heat Generation Lift 2</span>
<span class="t" style="left:201.5px;top:333.14px;font-size:12px;color:#000;font-style:italic;letter-spacing:-0.339px;">(dode2)</span>
<span class="t" style="left:81px;top:351.14px;font-size:12px;color:#000;letter-spacing:-0.132px;">Heat Generation Lift 3</span>
<span class="t" style="left:201.5px;top:351.14px;font-size:12px;color:#000;font-style:italic;letter-spacing:-0.339px;">(dode3)</span>
<span class="t" style="left:81px;top:369.14px;font-size:12px;color:#000;letter-spacing:-0.132px;">Heat Generation Lift 4</span>
<span class="t" style="left:201.5px;top:369.14px;font-size:12px;color:#000;font-style:italic;letter-spacing:-0.339px;">(dode4)</span>
<span class="t" style="left:81px;top:387.14px;font-size:12px;color:#000;letter-spacing:-0.082px;">Heat Generation Lift 4 Top 1m</span>
<span class="t" style="left:247px;top:387.14px;font-size:12px;color:#000;font-style:italic;letter-spacing:-0.268px;">(dode6)</span>
<span class="t" style="left:81px;top:405.14px;font-size:12px;color:#000;letter-spacing:-0.132px;">Heat Generation Lift 5</span>
<span class="t" style="left:201.5px;top:405.14px;font-size:12px;color:#000;font-style:italic;letter-spacing:-0.339px;">(dode5)</span>
<span class="t" style="left:81px;top:423.14px;font-size:12px;color:#000;letter-spacing:-0.191px;">Heat Transfer in Solids</span>
<span class="t" style="left:203.5px;top:423.14px;font-size:12px;color:#000;font-style:italic;letter-spacing:0.000px;">(ht)</span>
<span class="t" style="left:81px;top:441.14px;font-size:12px;color:#000;letter-spacing:-0.125px;">Solid Mechanics</span>
<span class="t" style="left:172px;top:441.14px;font-size:12px;color:#000;font-style:italic;letter-spacing:-0.167px;">(solid)</span>
<span class="t" style="left:81px;top:459.14px;font-size:12px;color:#7a7a7a;letter-spacing:-0.448px;">Events</span>
<span class="t" style="left:120px;top:459.14px;font-size:12px;color:#7a7a7a;font-style:italic;letter-spacing:-0.293px;">(ev)</span>
<span class="t" style="left:81px;top:477.14px;font-size:12px;color:#000;letter-spacing:0.137px;">Multiphysics</span>
<span class="t" style="left:81px;top:495.14px;font-size:12px;color:#000;letter-spacing:-0.310px;">Mesh 1</span>
<span class="t" style="left:61px;top:513.14px;font-size:12px;color:#000;letter-spacing:-0.315px;">Study 1</span>
<span class="t" style="left:81px;top:531.14px;font-size:12px;color:#000;letter-spacing:-0.178px;">Step 1: Time Dependent</span>
<span class="t" style="left:81px;top:549.14px;font-size:12px;color:#000;letter-spacing:-0.035px;">Solver Configurations</span>
<span class="t" style="left:81px;top:567.14px;font-size:12px;color:#000;letter-spacing:-0.003px;">Job Configurations</span>
</div></body></html>
